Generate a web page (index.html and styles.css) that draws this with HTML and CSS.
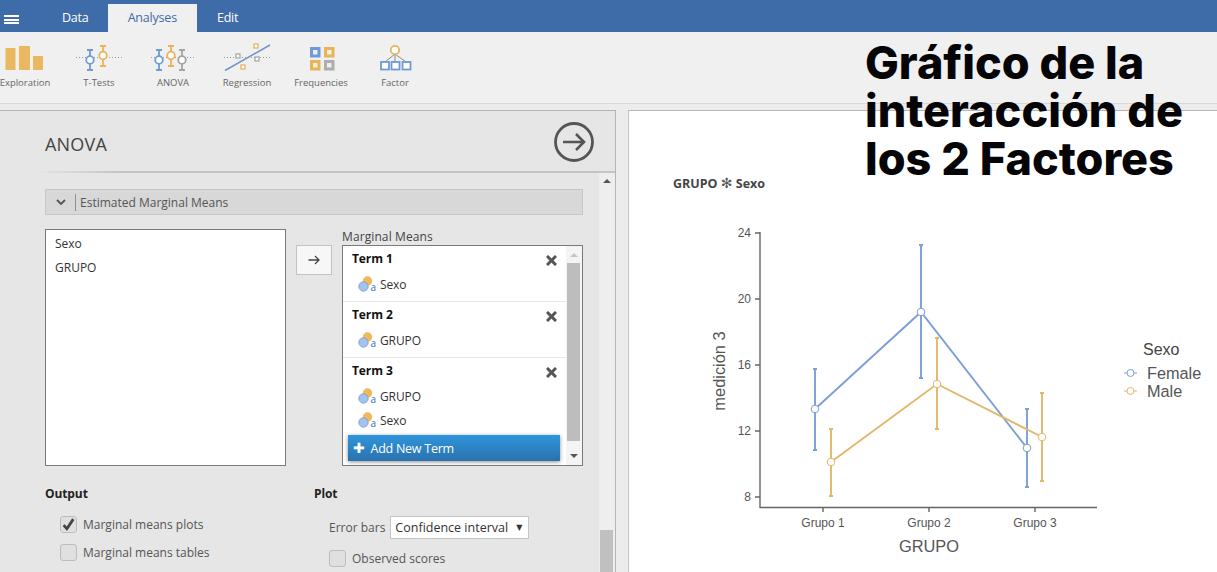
FILE: index.html
```html
<!DOCTYPE html>
<html lang="es">
<head>
<meta charset="utf-8">
<title>jamovi ANOVA</title>
<link rel="stylesheet" href="styles.css">
</head>
<body>
<div class="app">
  <header class="topbar">
    <button class="burger" aria-label="Menu"><span></span><span></span><span></span></button>
    <nav class="tabs">
      <span class="tab">Data</span>
      <span class="tab active">Analyses</span>
      <span class="tab">Edit</span>
    </nav>
  </header>

  <section class="ribbon">
    <div class="tool">
      <svg class="tool-icon" viewBox="0 0 74 42"><g fill="#e9b861"><rect x="17.500" y="14" width="10" height="22"/><rect x="31" y="12" width="11" height="24"/><rect x="45" y="22" width="10" height="14"/></g></svg>
      <span>Exploration</span>
    </div>
    <div class="tool">
      <svg class="tool-icon" viewBox="0 0 74 42">
        <line x1="14" y1="23.500" x2="60" y2="23.500" class="dots"/>
        <g class="pb"><path d="M25 16h6M28 16v20M25 36h6"/><circle cx="28" cy="26" r="3.800"/></g>
        <g class="po"><path d="M38 12h6M41 12v20M38 32h6"/><circle cx="41" cy="21.500" r="3.800"/></g>
      </svg>
      <span>T-Tests</span>
    </div>
    <div class="tool">
      <svg class="tool-icon" viewBox="0 0 74 42">
        <line x1="15" y1="23.500" x2="58" y2="23.500" class="dots"/>
        <g class="pb"><path d="M20 16h6M23 16v20M20 36h6"/><circle cx="23" cy="26" r="3.800"/></g>
        <g class="po"><path d="M32 12h6M35 12v20M32 32h6"/><circle cx="35" cy="21.500" r="3.800"/></g>
        <g class="pg"><path d="M43 16h6M46 16v20M43 36h6"/><circle cx="46" cy="26" r="3.800"/></g>
      </svg>
      <span>ANOVA</span>
    </div>
    <div class="tool">
      <svg class="tool-icon" viewBox="0 0 74 42">
        <line x1="14" y1="23.500" x2="60" y2="23.500" class="dots"/>
        <line x1="15" y1="36.500" x2="60" y2="11" stroke="#7096c8" stroke-width="1.500"/>
        <g fill="#fff" stroke-width="1.300">
          <rect x="44" y="10" width="4" height="4" stroke="#e6b35c"/>
          <rect x="26" y="20" width="4" height="4" stroke="#a9a9a9"/>
          <rect x="45" y="23" width="4" height="4" stroke="#a9a9a9"/>
          <rect x="31" y="31" width="4" height="4" stroke="#e6b35c"/>
        </g>
      </svg>
      <span>Regression</span>
    </div>
    <div class="tool">
      <svg class="tool-icon" viewBox="0 0 74 42">
        <g stroke-width="3">
          <rect x="27.500" y="14.500" width="7.500" height="7.500" fill="#e8eef7" stroke="#6f9ad4"/>
          <rect x="41.500" y="14.500" width="7.500" height="7.500" fill="#fbf0db" stroke="#e8b45a"/>
          <rect x="27.500" y="27.500" width="7.500" height="7.500" fill="#fbf0db" stroke="#e8b45a"/>
          <rect x="41.500" y="27.500" width="7.500" height="7.500" fill="#efefef" stroke="#adadad"/>
        </g>
      </svg>
      <span>Frequencies</span>
    </div>
    <div class="tool">
      <svg class="tool-icon" viewBox="0 0 74 42">
        <path d="M37 20L27 28M37 20V28M37 20L48 28" stroke="#8a8a8a" fill="none"/>
        <circle cx="37" cy="16" r="4.200" fill="#fff" stroke="#e8b45a" stroke-width="1.800"/>
        <g fill="#fff" stroke="#6f9ad4" stroke-width="1.800">
          <rect x="23" y="28" width="8" height="7.500"/>
          <rect x="33.500" y="28" width="8" height="7.500"/>
          <rect x="44.500" y="28" width="8" height="7.500"/>
        </g>
      </svg>
      <span>Factor</span>
    </div>
  </section>

  <main class="workspace">
    <section class="options">
      <div class="options-head">
        <h1>ANOVA</h1>
        <svg class="go" viewBox="0 0 42 42" aria-label="Close">
          <circle cx="21" cy="21" r="18.500" fill="none" stroke="#555" stroke-width="2.800"/>
          <path d="M10 21H31M23 13l8 8-8 8" fill="none" stroke="#555" stroke-width="2.600"/>
        </svg>
      </div>
      <div class="options-body">
        <div class="options-content">
          <div class="section-bar">
            <svg class="chev" viewBox="0 0 10 6"><path d="M1 1l4 4 4-4" fill="none" stroke="#555" stroke-width="1.800"/></svg>
            <span class="section-title">Estimated Marginal Means</span>
          </div>
          <div class="supplier">
            <ul class="varlist">
              <li>Sexo</li>
              <li>GRUPO</li>
            </ul>
            <button class="move" aria-label="Move">
              <svg viewBox="0 0 12 10"><path d="M0.500 5H11M7 1l4 4-4 4" fill="none" stroke="#444" stroke-width="1.300"/></svg>
            </button>
            <div class="target">
              <div class="target-label">Marginal Means</div>
              <div class="term-box">
                <div class="terms">
                  <div class="term">
                    <div class="term-head"><b>Term 1</b><svg class="x" viewBox="0 0 11 11"><path d="M1 1l9 9M10 1l-9 9"/></svg></div>
                    <div class="term-var"><svg class="nom" viewBox="0 0 18 16"><circle cx="9.500" cy="5" r="4.700" fill="#f0b858"/><circle cx="5.500" cy="10.500" r="4.700" fill="#a3c2ec" stroke="#6f97cc" stroke-width=".8"/><text x="12.500" y="15" class="a">a</text></svg>Sexo</div>
                  </div>
                  <div class="term">
                    <div class="term-head"><b>Term 2</b><svg class="x" viewBox="0 0 11 11"><path d="M1 1l9 9M10 1l-9 9"/></svg></div>
                    <div class="term-var"><svg class="nom" viewBox="0 0 18 16"><circle cx="9.500" cy="5" r="4.700" fill="#f0b858"/><circle cx="5.500" cy="10.500" r="4.700" fill="#a3c2ec" stroke="#6f97cc" stroke-width=".8"/><text x="12.500" y="15" class="a">a</text></svg>GRUPO</div>
                  </div>
                  <div class="term last">
                    <div class="term-head"><b>Term 3</b><svg class="x" viewBox="0 0 11 11"><path d="M1 1l9 9M10 1l-9 9"/></svg></div>
                    <div class="term-var"><svg class="nom" viewBox="0 0 18 16"><circle cx="9.500" cy="5" r="4.700" fill="#f0b858"/><circle cx="5.500" cy="10.500" r="4.700" fill="#a3c2ec" stroke="#6f97cc" stroke-width=".8"/><text x="12.500" y="15" class="a">a</text></svg>GRUPO</div>
                    <div class="term-var"><svg class="nom" viewBox="0 0 18 16"><circle cx="9.500" cy="5" r="4.700" fill="#f0b858"/><circle cx="5.500" cy="10.500" r="4.700" fill="#a3c2ec" stroke="#6f97cc" stroke-width=".8"/><text x="12.500" y="15" class="a">a</text></svg>Sexo</div>
                  </div>
                </div>
                <div class="mini-scroll">
                  <i class="arrow-up"></i>
                  <div class="mini-thumb"></div>
                  <i class="arrow-down"></i>
                </div>
                <button class="add-term"><span class="plus">✚</span>Add New Term</button>
              </div>
            </div>
          </div>
          <div class="settings">
            <div class="set-col">
              <h2>Output</h2>
              <div class="check-row indent"><span class="box checked"><svg viewBox="0 0 14 14"><path d="M2.500 7.500l3 3.500 6-9" fill="none" stroke="#444" stroke-width="2.600"/></svg></span>Marginal means plots</div>
              <div class="check-row indent"><span class="box"></span>Marginal means tables</div>
            </div>
            <div class="set-col">
              <h2>Plot</h2>
              <div class="select-row">Error bars<span class="select">Confidence interval<i>▼</i></span></div>
              <div class="check-row observed"><span class="box"></span>Observed scores</div>
            </div>
          </div>
        </div>
        <div class="scrollbar">
          <i class="arrow-up"></i>
          <div class="thumb"></div>
        </div>
      </div>
    </section>

    <section class="results">
      <h3>GRUPO <span class="star">✻</span> Sexo</h3>
      <svg class="plot" viewBox="628 190 589 382" aria-label="Interaction plot">
        <g class="axis">
          <path d="M760 232V507.500H1097"/>
          <path d="M755 233h5M755 299h5M755 365h5M755 431h5M755 497h5M823 507v5M929 507v5M1035 507v5"/>
        </g>
        <g class="ticks">
          <text x="751" y="237" text-anchor="end">24</text>
          <text x="751" y="303" text-anchor="end">20</text>
          <text x="751" y="369" text-anchor="end">16</text>
          <text x="751" y="435" text-anchor="end">12</text>
          <text x="751" y="501" text-anchor="end">8</text>
          <text x="823" y="527" text-anchor="middle">Grupo 1</text>
          <text x="929" y="527" text-anchor="middle">Grupo 2</text>
          <text x="1035" y="527" text-anchor="middle">Grupo 3</text>
        </g>
        <text class="ax-title" x="929" y="552" text-anchor="middle">GRUPO</text>
        <text class="ax-title" transform="translate(725 371) rotate(-90)" text-anchor="middle">medición 3</text>

        <g class="blue">
          <path d="M815 369V450M813 369h4M813 450h4M921 245V378M919 245h4M919 378h4M1027 409V487M1025 409h4M1025 487h4"/>
          <path d="M815 409L921 312L1027 448"/>
        </g>
        <g class="orange">
          <path d="M831 429V496M829 429h4M829 496h4M937 338V429M935 338h4M935 429h4M1042 393V481M1040 393h4M1040 481h4"/>
          <path d="M831 462L937 384L1042 437"/>
        </g>
        <g class="pt-blue"><circle cx="815" cy="409" r="3.800"/><circle cx="921" cy="312" r="3.800"/><circle cx="1027" cy="448" r="3.800"/></g>
        <g class="pt-orange"><circle cx="831" cy="462" r="3.800"/><circle cx="937" cy="384" r="3.800"/><circle cx="1042" cy="437" r="3.800"/></g>

        <text class="leg-title" x="1143" y="355">Sexo</text>
        <path class="leg-blue" d="M1124 373h13"/><circle class="leg-dot-b" cx="1130.500" cy="373" r="3.500"/>
        <path class="leg-orange" d="M1124 391h13"/><circle class="leg-dot-o" cx="1130.500" cy="391" r="3.500"/>
        <text class="leg" x="1147" y="379">Female</text>
        <text class="leg" x="1147" y="397">Male</text>
      </svg>
    </section>
  </main>

  <div class="overlay-title">Gráfico de la<br>interacción de<br>los 2 Factores</div>
</div>
</body>
</html>
```
FILE: styles.css
```css
* { box-sizing: border-box; }
html, body { margin: 0; padding: 0; height: 100%; overflow: hidden; background: #ececec; }
body { font-family: "Open Sans", "Noto Sans", sans-serif; font-size: 12px; color: #333; }
.app { position: relative; width: 1217px; height: 572px; overflow: hidden; display: flex; flex-direction: column; }

.topbar { height: 32px; flex: none; background: #3e6ca8; display: flex; align-items: flex-end; }
.burger { width: 24px; height: 32px; margin: 0; padding: 15px 5px 8px 4px; border: 0; background: none; display: flex; flex-direction: column; justify-content: space-between; }
.burger span { display: block; height: 2px; background: #fff; }
.tabs { display: flex; margin-left: 18px; }
.tab { height: 28px; padding: 0 20px; line-height: 28px; color: #fff; font-size: 12.500px; letter-spacing: -.2px; }
.tab.active { background: #f0f0f0; color: #3e6ca8; margin-left: -1px; }

.ribbon { height: 72px; flex: none; background: #f0f0f0; border-bottom: 1px solid #d9d9d9; display: flex; padding-top: 2px; }
.tool { width: 74px; flex: none; display: flex; flex-direction: column; align-items: center; color: #666; font-size: 9.500px; }
.tool:first-child { margin-left: -12px; }
.tool-icon { width: 74px; height: 42px; display: block; }
.tool span { line-height: 14px; white-space: nowrap; }
.dots { stroke: #9a9a9a; stroke-width: 1; stroke-dasharray: 1 2; }
.pb, .po, .pg { fill: #fff; stroke-width: 1.800; }
.pb { stroke: #6f9ad4; }
.po { stroke: #e8b45a; }
.pg { stroke: #a3a3a3; }

.workspace { flex: 1; min-height: 0; display: flex; padding-top: 6px; background: #ececec; }

.options { width: 616px; flex: none; display: flex; flex-direction: column; background: #e6e6e6; border-top: 1px solid #b5b5b5; border-right: 1px solid #b5b5b5; }
.options-head { height: 62px; flex: none; display: flex; justify-content: space-between; align-items: center; padding: 0 20px 0 45px; position: relative; }
.options-head::after { content: ""; position: absolute; left: 35px; right: 0; bottom: 0; height: 2px; background: linear-gradient(90deg, #e6e6e6, #c4c4c4 15%, #c4c4c4); }
.options-head h1 { margin: 3px 0 0; font-size: 18px; font-weight: 400; color: #444; letter-spacing: .2px; }
.go { width: 42px; height: 42px; display: block; }
.options-body { flex: 1; min-height: 0; display: flex; }
.options-content { flex: 1; min-width: 0; padding: 16px 0 0 45px; }

.section-bar { height: 26px; width: 538px; background: #d8d8d8; border: 1px solid #c6c6c6; display: flex; align-items: center; }
.chev { width: 10px; height: 6px; margin: 0 9px 0 10px; flex: none; }
.section-title { border-left: 1px solid #8f8f8f; padding: 1px 0 0 4px; line-height: 16px; color: #555; font-size: 12px; letter-spacing: 0; }

.supplier { display: flex; align-items: flex-start; margin-top: 14px; }
.varlist { width: 241px; height: 237px; margin: 0; padding: 2px 0 0 9px; list-style: none; background: #fff; border: 1px solid #7a7a7a; flex: none; }
.varlist li { height: 24px; line-height: 24px; color: #333; letter-spacing: 0; }
.move { width: 36px; height: 30px; margin: 16px 10px 0; padding: 0; flex: none; background: #f7f7f7; border: 1px solid #c2c2c2; display: flex; align-items: center; justify-content: center; }
.move svg { width: 12px; height: 10px; display: block; }
.target { width: 241px; flex: none; }
.target-label { height: 16px; line-height: 15px; color: #444; letter-spacing: .1px; }
.term-box { position: relative; height: 221px; background: #fff; border: 1px solid #7a7a7a; display: flex; overflow: hidden; }
.terms { width: 223px; flex: none; }
.term { height: 56px; padding: 0 0 0 9px; border-bottom: 1px solid #e6e6e6; }
.term.last { height: auto; border-bottom: 0; }
.term-head { height: 26px; display: flex; justify-content: space-between; align-items: center; padding-right: 9px; color: #111; }
.term-head b { font-weight: 700; letter-spacing: -.1px; position: relative; top: -1px; }
.x { width: 11px; height: 11px; display: block; position: relative; top: 1px; fill: none; stroke: #555; stroke-width: 3; }
.term-var { height: 24px; display: flex; align-items: center; padding-left: 6px; color: #333; letter-spacing: -.1px; }
.nom { width: 18px; height: 16px; margin-right: 4px; flex: none; display: block; overflow: visible; }
.a { font: 10px "Open Sans", sans-serif; fill: #2f6fb5; }
.mini-scroll { width: 16px; flex: none; background: #f4f4f4; position: relative; display: flex; flex-direction: column; align-items: center; }
.mini-thumb { position: absolute; left: 1px; right: 2px; top: 17px; height: 178px; background: #bdbdbd; }
.arrow-up, .arrow-down { display: block; width: 0; height: 0; border-left: 4px solid transparent; border-right: 4px solid transparent; }
.mini-scroll .arrow-up { margin-top: 7px; border-bottom: 4px solid #c6c6c6; }
.mini-scroll .arrow-down { position: absolute; bottom: 7px; border-top: 4px solid #555; }
.add-term { position: absolute; left: 5px; top: 189px; width: 212px; height: 26px; padding: 0 0 0 5px; border: 0; display: flex; align-items: center; color: #fff; font: 12.500px "Open Sans", sans-serif; letter-spacing: -.25px; background: linear-gradient(#2f95dc, #2a72ad); box-shadow: 0 1px 4px rgba(0, 0, 0, .45); }
.plus { font: 14px "DejaVu Sans", sans-serif; margin-right: 6px; }

.settings { display: flex; margin-top: 19px; }
.set-col { width: 269px; flex: none; }
.set-col h2 { margin: 0 0 13px; font-size: 12px; line-height: 18px; font-weight: 700; color: #222; letter-spacing: -.1px; }
.check-row { display: flex; align-items: center; color: #555; letter-spacing: 0; }
.check-row.indent { margin: 0 0 11px 15px; }
.check-row.observed { margin: 11px 0 0 15px; }
.box { width: 17px; height: 17px; margin-right: 6px; flex: none; background: #e0e0e0; border: 1px solid #bdbdbd; border-radius: 3px; display: block; }
.box svg { width: 15px; height: 15px; display: block; }
.select-row { display: flex; align-items: center; margin: 0 0 0 15px; color: #555; letter-spacing: 0; height: 23px; white-space: nowrap; }
.select { width: 139px; height: 23px; margin-left: 5px; padding: 0 6px 0 4px; flex: none; background: #fff; border: 1px solid #c6c6c6; display: flex; align-items: center; justify-content: space-between; color: #333; white-space: nowrap; font-size: 12.500px; }
.select i { font-style: normal; font-size: 8px; font-family: "DejaVu Sans", sans-serif; }

.scrollbar { width: 16px; flex: none; background: #eee; position: relative; display: flex; flex-direction: column; align-items: center; }
.scrollbar .arrow-up { margin-top: 6px; border-bottom: 4px solid #555; }
.thumb { position: absolute; left: 1px; right: 2px; bottom: 0; height: 42px; background: #c0c0c0; }

.results { margin-left: 12px; flex: 1; min-width: 0; background: #fff; border-top: 1px solid #b5b5b5; border-left: 1px solid #c4c4c4; position: relative; }
.results h3 { margin: 0; position: absolute; left: 44px; top: 64px; font-size: 12.500px; line-height: 16px; font-weight: 700; color: #444; letter-spacing: 0; white-space: nowrap; }
.star { font-family: "DejaVu Sans", sans-serif; font-weight: 400; color: #555; font-size: 14px; }
.plot { position: absolute; left: -1px; top: 79px; width: 589px; height: 382px; display: block; font-family: "Liberation Sans", Arial, sans-serif; }
.axis path { fill: none; stroke: #666; stroke-width: 1.400; }
.ticks text { font-size: 12px; fill: #555; }
.ax-title { font-size: 16.400px; fill: #555; }
.blue path, .orange path { fill: none; stroke-width: 1.900; }
.blue path, .leg-blue { stroke: #7c9fd6; fill: none; }
.orange path, .leg-orange { stroke: #e2b76a; fill: none; }
.pt-blue circle, .pt-orange circle { fill: #fff; stroke-width: 1; }
.pt-blue circle { stroke: #7c9fd6; }
.pt-orange circle { stroke: #e2b76a; }
.leg-dot-b { fill: #fff; stroke: #7c9fd6; }
.leg-dot-o { fill: #fff; stroke: #e2b76a; }
.leg-title { font-size: 16px; fill: #444; }
.leg { font-size: 16.300px; fill: #555; }

.overlay-title { position: absolute; left: 865px; top: 39px; font-family: "Inter", sans-serif; font-weight: 800; font-size: 45px; line-height: 48px; color: #050508; white-space: nowrap; font-variant-ligatures: none; }
```
